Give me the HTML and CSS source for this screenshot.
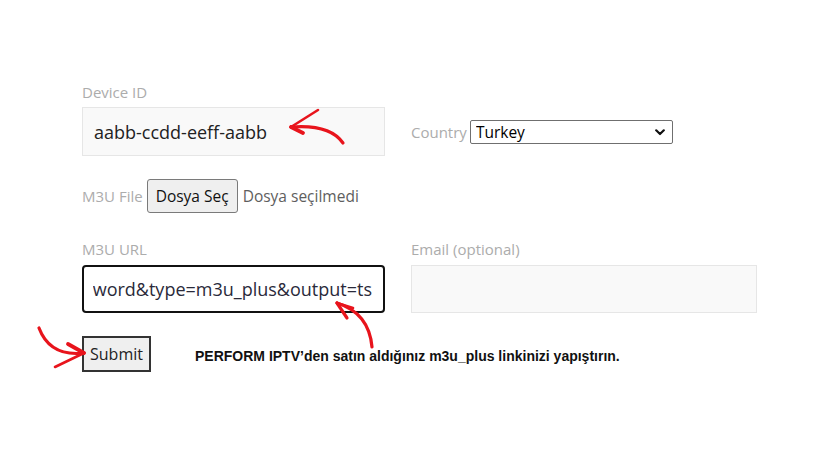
FILE: index.html
```html
<!DOCTYPE html>
<html lang="tr">
<head>
<meta charset="utf-8">
<title>Device form</title>
<link rel="stylesheet" href="styles.css">
</head>
<body>
<div class="page">
  <form class="form">
    <div class="row">
      <div class="cell c1"><label class="lbl">Device ID</label></div>
    </div>
    <div class="row row-center">
      <div class="cell c1"><div class="field soft">aabb-ccdd-eeff-aabb</div></div>
      <div class="cell c2 country">
        <label class="lbl">Country</label>
        <span class="sel-wrap">
          <select class="sel"><option>Turkey</option></select>
          <svg class="chev" width="10" height="7" viewBox="0 0 10 7" aria-hidden="true"><path d="M1.2,1.3 L5,5 L8.8,1.3" fill="none" stroke="#111" stroke-width="2.2" stroke-linecap="round" stroke-linejoin="round"/></svg>
        </span>
      </div>
    </div>
    <div class="row file-row">
      <span class="lbl">M3U File</span>
      <span class="file-btn">Dosya Seç</span>
      <span class="file-none">Dosya seçilmedi</span>
    </div>
    <div class="row label-row">
      <div class="cell c1"><label class="lbl">M3U URL</label></div>
      <div class="cell c2"><label class="lbl">Email (optional)</label></div>
    </div>
    <div class="row">
      <div class="cell c1"><div class="field strong"><div class="clip"><span class="scroll">sword&amp;type=m3u_plus&amp;output=ts</span></div></div></div>
      <div class="cell c2"><div class="field soft email"></div></div>
    </div>
    <div class="row submit-row">
      <span class="submit">Submit</span>
      <span class="note">PERFORM IPTV’den satın aldığınız m3u_plus linkinizi yapıştırın.</span>
    </div>
  </form>
  <svg class="arrows" width="820" height="461" viewBox="0 0 820 461" aria-hidden="true">
    <g fill="none" stroke="#e8141c" stroke-linecap="round" stroke-linejoin="round">
      <path d="M343,143 Q330,124 291,127" stroke-width="3.2"/>
      <path d="M291,127 L318,110" stroke-width="2.6"/>
      <path d="M291,127 L303,133" stroke-width="3.8"/>
      <path d="M372,347 Q369,313 337,303" stroke-width="3.2"/>
      <path d="M337,303 L353,308" stroke-width="2.6"/>
      <path d="M337,303 L347,318" stroke-width="3.2"/>
      <path d="M39,328 Q50,357 84,353" stroke-width="3.2"/>
      <path d="M84,353 L68,344" stroke-width="3.8"/>
      <path d="M84,353 L55,367" stroke-width="2.6"/>
    </g>
  </svg>
</div>
</body>
</html>
```
FILE: styles.css
```css
* { box-sizing: border-box; }
html, body { margin: 0; background: #fff; }
.page {
  position: relative;
  width: 820px;
  height: 461px;
  overflow: hidden;
  font-family: "Open Sans", "Noto Sans", sans-serif;
}
.form {
  display: flex;
  flex-direction: column;
  padding: 81px 0 0 82px;
}
.row { display: flex; column-gap: 26px; }
.row-center { align-items: center; margin-top: 4px; }
.cell.c1 { width: 303px; }
.cell.c2 { width: 346px; }
.lbl {
  font-size: 15px;
  line-height: 20px;
  color: #acacac;
}
.field {
  height: 49px;
  font-size: 18px;
  color: #222;
  display: flex;
  align-items: center;
  white-space: nowrap;
}
.field.soft {
  background: #f9f9f9;
  border: 1px solid #e6e6e6;
  padding: 0 11px;
}
.field.strong {
  height: 48px;
  background: #fff;
  border: 2px solid #111;
  border-radius: 4px;
  padding: 0 11px 0 9px;
  color: #2a2a3a;
}
.clip {
  flex: 1;
  min-width: 0;
  display: flex;
  justify-content: flex-end;
  overflow: hidden;
}
.scroll { flex: none; }
.field.email { height: 48px; }
.country { display: flex; align-items: center; column-gap: 3px; }
.sel-wrap {
  position: relative;
  display: flex;
}
.sel {
  -webkit-appearance: none;
  appearance: none;
  width: 203px;
  height: 24px;
  font-family: "Open Sans", sans-serif;
  font-size: 15.5px;
  color: #000;
  border: 1px solid #6f6f6f;
  border-radius: 2px;
  background: #fff;
  padding: 0 20px 0 5px;
}
.chev {
  position: absolute;
  right: 8px;
  top: 9px;
  pointer-events: none;
}
.file-row {
  margin-top: 23px;
  align-items: center;
  column-gap: 0;
}
.file-btn {
  margin-left: 4px;
  height: 34px;
  width: 91px;
  display: flex;
  align-items: center;
  justify-content: center;
  font-size: 15.5px;
  color: #111;
  background: #efefef;
  border: 1px solid #7a7a7a;
  border-radius: 3px;
}
.file-none {
  margin-left: 5px;
  font-size: 15.5px;
  color: #5e5e5e;
}
.label-row { margin-top: 25px; }
.label-row + .row { margin-top: 5px; }
.submit-row {
  margin-top: 23px;
  align-items: center;
  column-gap: 44px;
}
.submit {
  width: 69px;
  height: 36px;
  display: flex;
  align-items: center;
  justify-content: center;
  font-size: 16px;
  color: #222;
  background: #efefef;
  border: 2px solid #333;
}
.note {
  font-family: "Liberation Sans", Arial, sans-serif;
  font-weight: bold;
  font-size: 14px;
  color: #111;
  margin-top: 4px;
}
.arrows {
  position: absolute;
  left: 0;
  top: 0;
  pointer-events: none;
}
```
